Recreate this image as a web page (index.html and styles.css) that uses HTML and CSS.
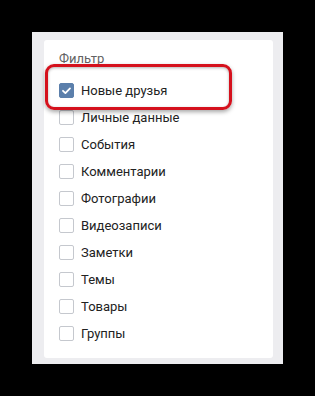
FILE: index.html
```html
<!DOCTYPE html>
<html lang="ru">

<head>
  <meta charset="UTF-8">
  <meta name="viewport" content="width=device-width, initial-scale=1.0">
  <title>Фильтр</title>
  <link rel="stylesheet" href="styles.css">
</head>

<body>
  <div class="panel">
    <div class="filter-card">
      <div class="filter-title">Фильтр</div>
      <ul class="filter-list">
        <li class="filter-item checked"><span class="box"><svg viewBox="0 0 15 15" width="15" height="15"><path d="M4 7.8l2.4 2.3L11 5.4" fill="none" stroke="#fff" stroke-width="1.8" stroke-linecap="round" stroke-linejoin="round"/></svg></span>Новые друзья</li>
        <li class="filter-item"><span class="box"></span>Личные данные</li>
        <li class="filter-item"><span class="box"></span>События</li>
        <li class="filter-item"><span class="box"></span>Комментарии</li>
        <li class="filter-item"><span class="box"></span>Фотографии</li>
        <li class="filter-item"><span class="box"></span>Видеозаписи</li>
        <li class="filter-item"><span class="box"></span>Заметки</li>
        <li class="filter-item"><span class="box"></span>Темы</li>
        <li class="filter-item"><span class="box"></span>Товары</li>
        <li class="filter-item"><span class="box"></span>Группы</li>
      </ul>
      <div class="highlight"></div>
    </div>
  </div>
</body>

</html>
```

FILE: styles.css
```css
body {
  font-family: Roboto, "Liberation Sans", Arial, sans-serif;
  background-color: #000;
  margin: 0;
  padding: 0;
  height: 396px;
}

.panel {
  background-color: #ededf0;
  margin: 32px 0 0 32px;
  width: 251px;
  padding: 8px 10px 6px 12px;
  box-sizing: border-box;
}

.filter-card {
  position: relative;
  background-color: #fff;
  border-radius: 3px;
  padding: 10px 15px 11px;
}

.filter-title {
  font-size: 13px;
  line-height: 18px;
  color: #626262;
  margin-bottom: 9px;
}

.filter-list {
  list-style: none;
  margin: 0;
  padding: 0;
}

.filter-item {
  display: flex;
  align-items: center;
  height: 27px;
  font-size: 13px;
  color: #222;
}

.filter-item .box {
  width: 15px;
  height: 15px;
  box-sizing: border-box;
  border: 1px solid #c5c8ce;
  border-radius: 2px;
  margin-right: 7px;
  flex-shrink: 0;
}

.filter-item.checked .box {
  background-color: #5b7fab;
  border-color: #5b7fab;
  display: flex;
}

.filter-item.checked .box svg {
  margin: -1px;
}

.highlight {
  position: absolute;
  left: 1px;
  top: 24px;
  width: 187px;
  height: 46px;
  box-sizing: border-box;
  border: 3px solid #d5111d;
  border-radius: 9px;
  box-shadow: 0 2px 4px rgba(0, 0, 0, 0.35), inset 0 1px 3px rgba(0, 0, 0, 0.3);
}
```
